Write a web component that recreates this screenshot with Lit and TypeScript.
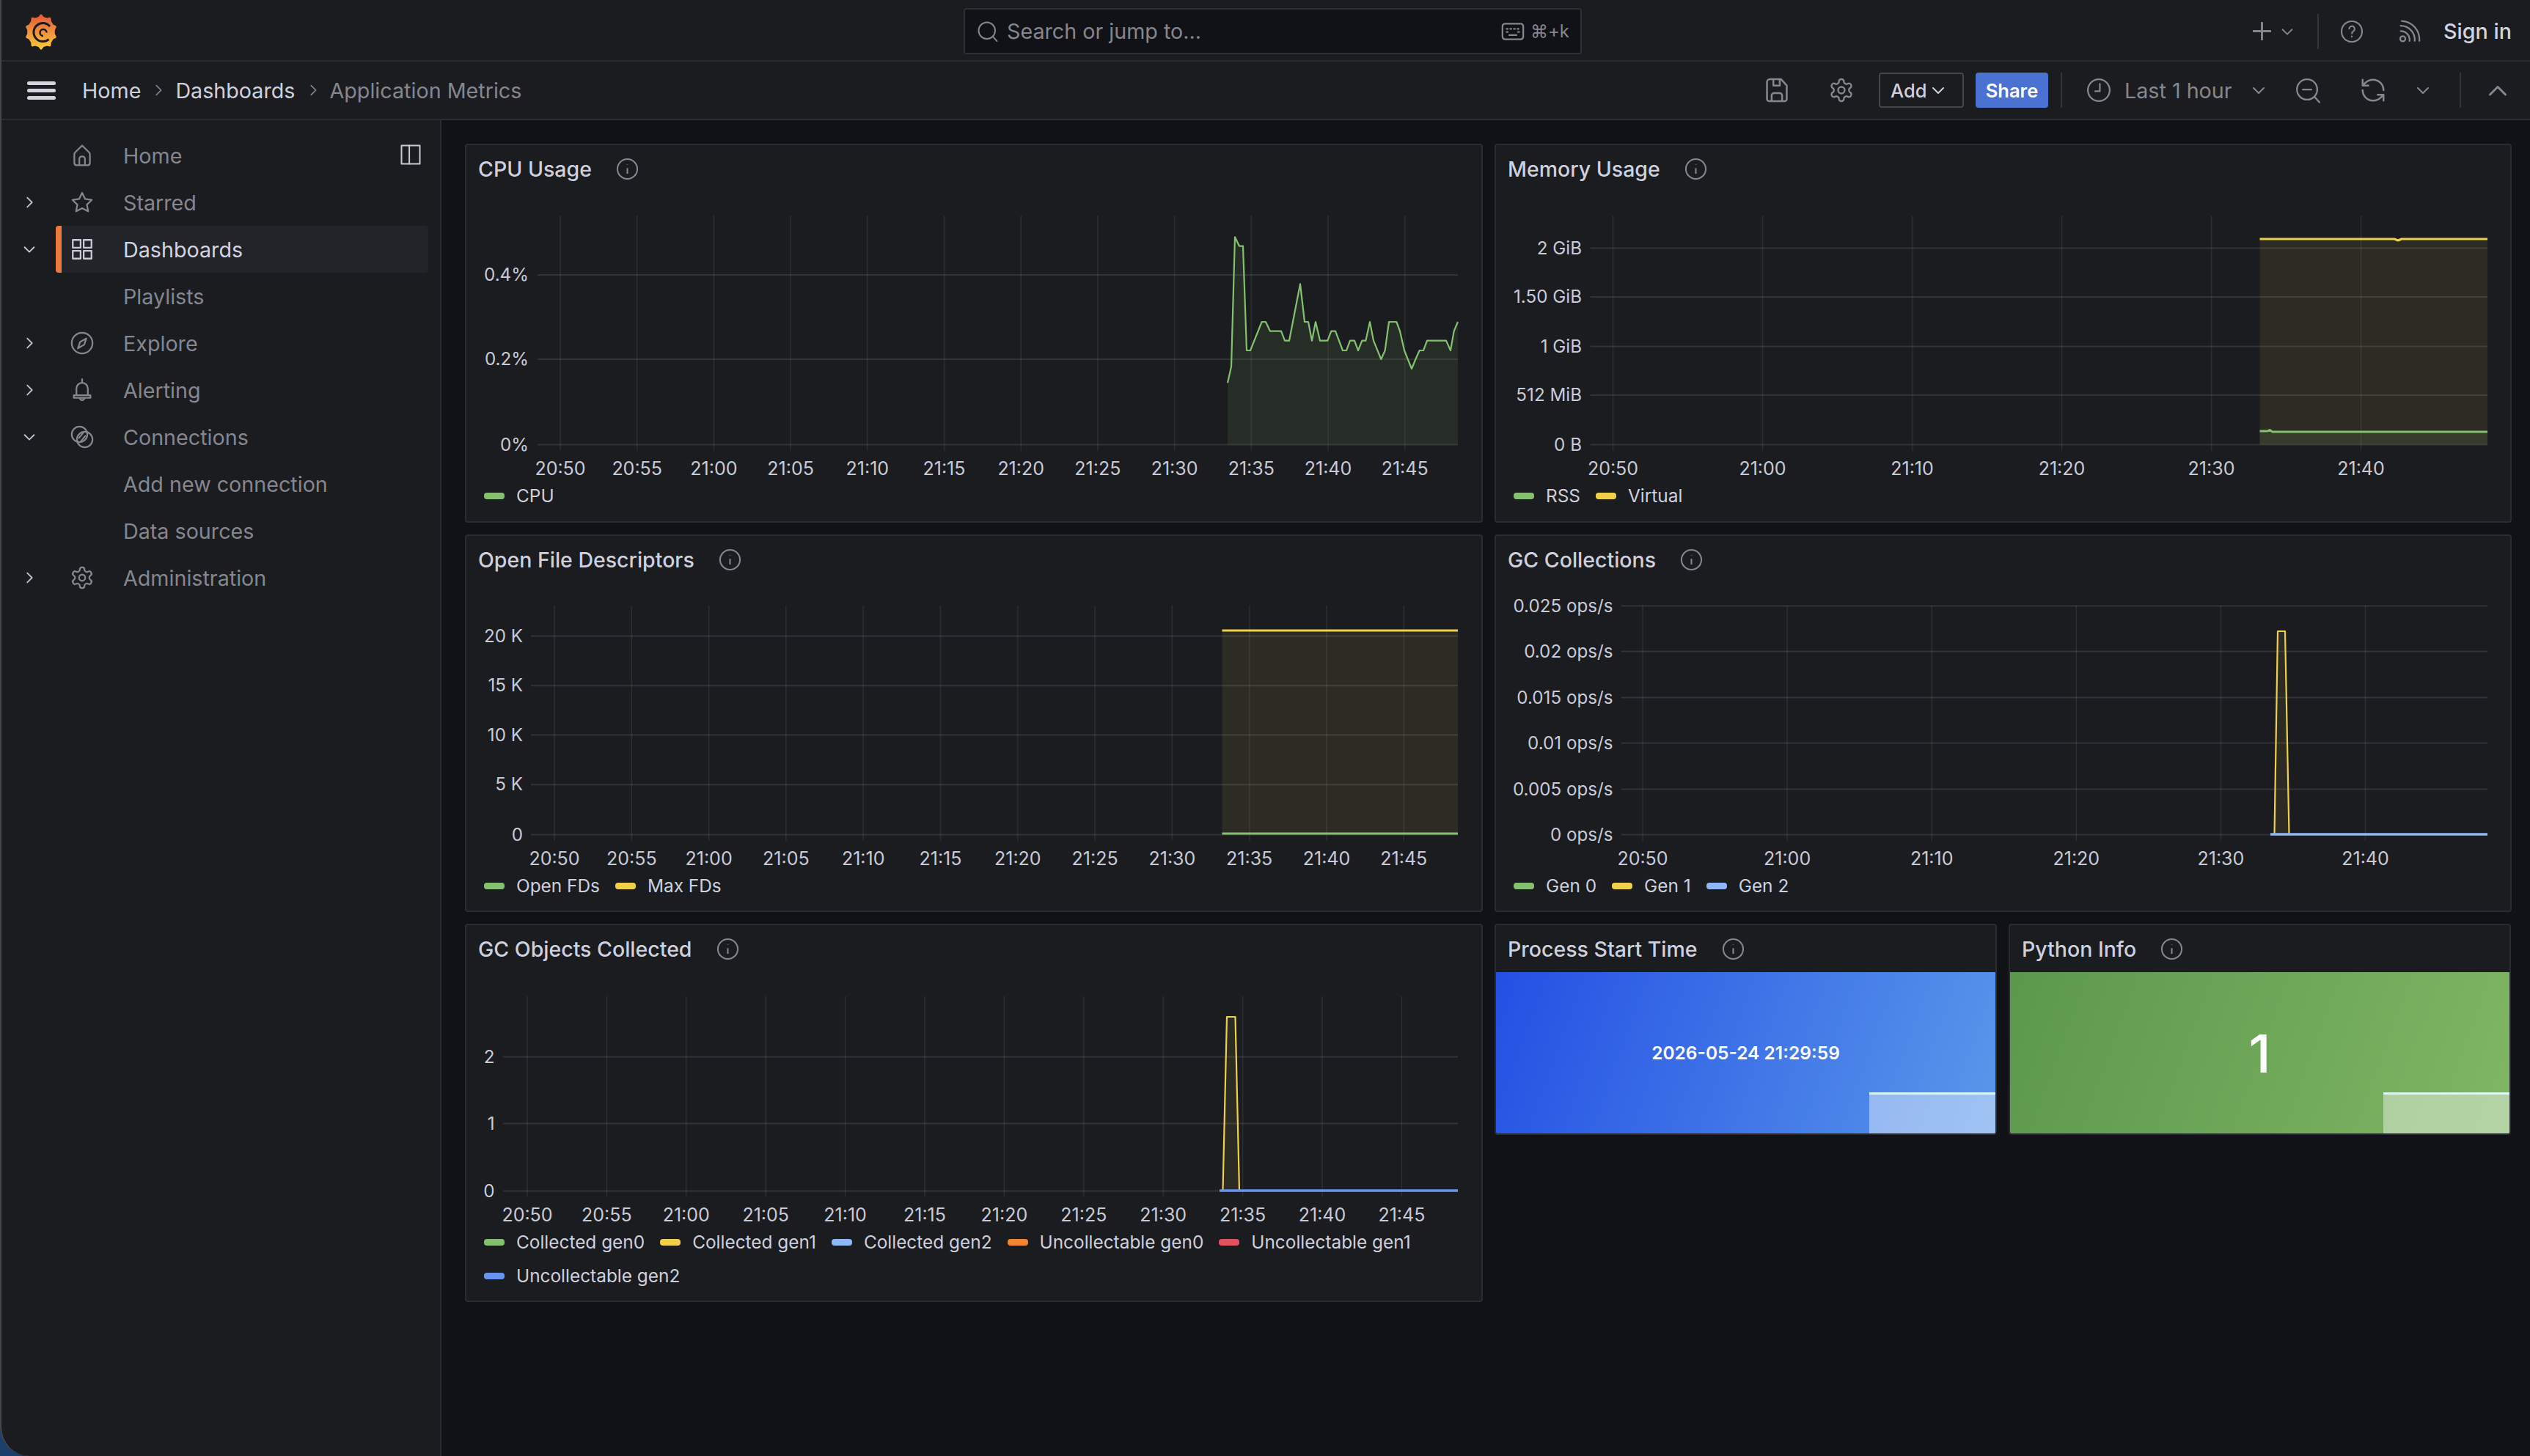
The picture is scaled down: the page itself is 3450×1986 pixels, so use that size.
import { LitElement, html, svg, css } from "lit";
import { customElement, property } from "lit/decorators.js";
import { classMap } from "lit/directives/class-map.js";

const GREEN = "#85c070";
const YELLOW = "#eed04a";
const SKY = "#8fb7f8";
const ORANGE = "#f2852f";
const RED = "#e0525f";
const BLUE = "#6795ee";

// outline icons, all on a 24 unit box
const ICONS: Record<string, any> = {
  home: svg`<path d="M12 2.500 5.200 9.200Q4.500 10 4.500 11v8q0 2.500 2.500 2.500h10q2.500 0 2.500-2.500v-8q0-1-.7-1.800zM9.300 21.500V15.500q0-2.500 2.700-2.500t2.700 2.500v6"/>`,
  star: svg`<path d="m12 2.800 2.900 6 6.400.9-4.700 4.500 1.200 6.500L12 17.600l-5.800 3.100 1.200-6.500-4.700-4.500 6.400-.9z"/>`,
  apps: svg`<rect x="3" y="3" width="7.500" height="7.500"/><rect x="13.500" y="3" width="7.500" height="7.500"/><rect x="3" y="13.500" width="7.500" height="7.500"/><rect x="13.500" y="13.500" width="7.500" height="7.500"/>`,
  compass: svg`<circle cx="12" cy="12" r="10"/><path d="M16 7.500 14 13.500 8 17l2-6z"/>`,
  bell: svg`<path d="M12 1.500V4M6.500 17v-6.500a5.500 5.500 0 0 1 11 0V17M4 17h16v2.500H4zM9.800 19.500a2.200 2.200 0 0 0 4.400 0"/>`,
  link: svg`<circle cx="9.500" cy="9.500" r="7.500"/><circle cx="14.500" cy="14.500" r="7.500"/><path d="m9 13 4-5M11 16l4-5"/>`,
  gear: svg`<path d="M12.220 2h-.44a2 2 0 0 0-2 2v.18a2 2 0 0 1-1 1.730l-.43.25a2 2 0 0 1-2 0l-.15-.08a2 2 0 0 0-2.730.73l-.22.38a2 2 0 0 0 .73 2.730l.15.1a2 2 0 0 1 1 1.720v.51a2 2 0 0 1-1 1.740l-.15.09a2 2 0 0 0-.73 2.730l.22.38a2 2 0 0 0 2.730.73l.15-.08a2 2 0 0 1 2 0l.43.25a2 2 0 0 1 1 1.730V20a2 2 0 0 0 2 2h.44a2 2 0 0 0 2-2v-.18a2 2 0 0 1 1-1.730l.43-.25a2 2 0 0 1 2 0l.15.08a2 2 0 0 0 2.730-.73l.22-.39a2 2 0 0 0-.73-2.730l-.15-.08a2 2 0 0 1-1-1.740v-.5a2 2 0 0 1 1-1.740l.15-.09a2 2 0 0 0 .73-2.730l-.22-.38a2 2 0 0 0-2.730-.73l-.15.08a2 2 0 0 1-2 0l-.43-.25a2 2 0 0 1-1-1.730V4a2 2 0 0 0-2-2z"/><circle cx="12" cy="12" r="3"/>`,
  right: svg`<path d="m9 5 7 7-7 7"/>`,
  down: svg`<path d="m5 9 7 7 7-7"/>`,
  up: svg`<path d="m5 16 7-7 7 7"/>`,
  dock: svg`<rect x="2" y="2" width="20" height="20"/><path d="M10.500 2v20"/>`,
  search: svg`<circle cx="11" cy="11" r="9"/><path d="m17.500 17.500 4.500 5"/>`,
  keyboard: svg`<rect x="2" y="4.500" width="20" height="15" rx="2.500"/><path d="M6 9.500h1M9.500 9.500h1M13 9.500h1M16.500 9.500h1M6 12.500h1M17 12.500h1M8.500 15.500h7"/>`,
  plus: svg`<path d="M12 1v22M1 12h22"/>`,
  help: svg`<circle cx="12" cy="12" r="10.500"/><path d="M9.300 9.200a2.800 2.800 0 1 1 4.200 2.500c-1 .6-1.500 1.100-1.500 2.300M12 17v.4"/>`,
  rss: svg`<circle cx="6" cy="19" r="2.500"/><path d="M4 11.500a8.500 8.500 0 0 1 8.500 9.500M4 6.500A13.500 13.500 0 0 1 17.500 21M5 1.800A18 18 0 0 1 22 21"/>`,
  save: svg`<path d="M6 2.500h9.500l5 5.500v11.500a2 2 0 0 1-2 2H5.500a2 2 0 0 1-2-2V5A2.500 2.500 0 0 1 6 2.500zM9 2.500V8h5.500V2.500M7.500 21.500v-5a2 2 0 0 1 2-2h5a2 2 0 0 1 2 2v5"/>`,
  clock: svg`<circle cx="12" cy="12" r="10.500"/><path d="M13 6v7H8.500"/>`,
  zoomOut: svg`<circle cx="11" cy="11" r="9.500"/><path d="M7 11h8M18 18l4.500 5"/>`,
  sync: svg`<path d="M21 12a9 9 0 0 0-9-9 9.750 9.750 0 0 0-6.740 2.740L3 8M3 3v5h5M3 12a9 9 0 0 0 9 9 9.750 9.750 0 0 0 6.740-2.740L21 16M16 16h5v5"/>`,
  info: svg`<circle cx="12" cy="12" r="10.500"/><path d="M12 11v6M12 7v.4"/>`,
};

function icon(name: string, size: number, cls = "") {
  return html`<svg class="ic ${cls}" width=${size} height=${size} viewBox="0 0 24 24">${ICONS[name]}</svg>`;
}

function gearPath() {
  const pts: string[] = [];
  const teeth = 10;
  for (let i = 0; i < teeth; i++) {
    const a = (i / teeth) * Math.PI * 2 - Math.PI / 2;
    const w = Math.PI / teeth;
    [[21, -w * 0.6], [24, -w * 0.12], [24, w * 0.12], [21, w * 0.6]].forEach(([r, d]) => {
      pts.push(`${(24 + r * 0.9 * Math.cos(a + d)).toFixed(1)},${(24.500 + r * Math.sin(a + d)).toFixed(1)}`);
    });
  }
  return pts.join(" ");
}

interface Series {
  color: string;
  pts: number[][];
  width?: number;
  fill?: string;
  base?: number;
}

interface ChartCfg {
  title: string;
  left: number;
  top: number;
  width: number;
  chartH: number;
  plot: number[];
  labelX: number;
  gridTop: number;
  tickBottom: number;
  x0: number;
  xStep: number;
  xLabels: string[];
  xLabelY: number;
  yTicks: [string, number][];
  series: Series[];
  legend: [string, string][];
}

const times = (step: number, n: number) =>
  Array.from({ length: n }, (_, i) => {
    const m = 20 * 60 + 50 + i * step;
    return `${Math.floor(m / 60)}:${String(m % 60).padStart(2, "0")}`;
  });

// traced from the screenshot at 3x, offset 1650,270
const cpuTrace = [
  [72, 757], [87, 690], [102, 160], [120, 197], [135, 197], [150, 624], [165, 624], [212, 507], [228, 507], [246, 545],
  [291, 545], [306, 584], [324, 584], [369, 352], [387, 507], [402, 507], [417, 584], [432, 507], [450, 584], [481, 584],
  [496, 545], [513, 545], [543, 624], [558, 624], [573, 584], [591, 584], [606, 624], [622, 584], [637, 584], [654, 507],
  [669, 584], [700, 660], [716, 624], [732, 507], [763, 507], [777, 545], [795, 624], [825, 699], [841, 660], [857, 624],
  [873, 624], [888, 584], [966, 584], [984, 624], [998, 545], [1014, 507],
].map(([x, y]) => [1650 + x / 3, 270 + y / 3]);

const CHARTS: Record<string, ChartCfg> = {
  cpu: {
    title: "CPU Usage", left: 634, top: 196, width: 1388, chartH: 391,
    plot: [733, 1988], labelX: 721, gridTop: 294, tickBottom: 615,
    x0: 764, xStep: 104.700, xLabels: times(5, 12), xLabelY: 648,
    yTicks: [["0.4%", 375], ["0.2%", 490], ["0%", 606.500]],
    series: [{ color: GREEN, pts: cpuTrace, fill: "rgba(133,192,112,.1)", base: 606.500, width: 2.200 }],
    legend: [["CPU", GREEN]],
  },
  mem: {
    title: "Memory Usage", left: 2038, top: 196, width: 1387, chartH: 391,
    plot: [2168.500, 3392], labelX: 2157, gridTop: 294, tickBottom: 615,
    x0: 2199.500, xStep: 204, xLabels: times(10, 6), xLabelY: 648,
    yTicks: [["2 GiB", 338.500], ["1.50 GiB", 405], ["1 GiB", 472.500], ["512 MiB", 539], ["0 B", 606.500]],
    series: [
      { color: YELLOW, pts: [[3081.500, 326], [3265, 326], [3270, 328], [3275, 326], [3392, 326]], fill: "rgba(238,208,74,.09)", base: 606.500, width: 3 },
      { color: GREEN, pts: [[3081.500, 588], [3092, 588], [3095, 586.500], [3099, 589], [3392, 589]], fill: "rgba(133,192,112,.1)", base: 606.500, width: 3 },
    ],
    legend: [["RSS", GREEN], ["Virtual", YELLOW]],
  },
  fds: {
    title: "Open File Descriptors", left: 634, top: 729, width: 1388, chartH: 390,
    plot: [724, 1988], labelX: 713, gridTop: 826, tickBottom: 1147,
    x0: 756, xStep: 105.300, xLabels: times(5, 12), xLabelY: 1180,
    yTicks: [["20 K", 867.500], ["15 K", 935.300], ["10 K", 1002.500], ["5 K", 1070.300], ["0", 1138.500]],
    series: [
      { color: YELLOW, pts: [[1666.500, 860], [1988, 860]], fill: "rgba(238,208,74,.09)", base: 1138.500, width: 3 },
      { color: GREEN, pts: [[1666.500, 1137], [1988, 1137]], width: 3 },
    ],
    legend: [["Open FDs", GREEN], ["Max FDs", YELLOW]],
  },
  gc: {
    title: "GC Collections", left: 2038, top: 729, width: 1387, chartH: 390,
    plot: [2211, 3392], labelX: 2199.500, gridTop: 826, tickBottom: 1147,
    x0: 2240, xStep: 197.100, xLabels: times(10, 6), xLabelY: 1180,
    yTicks: [["0.025 ops/s", 826.500], ["0.02 ops/s", 888.500], ["0.015 ops/s", 951.500], ["0.01 ops/s", 1013.500], ["0.005 ops/s", 1076.500], ["0 ops/s", 1138.500]],
    series: [
      { color: YELLOW, pts: [[3101.500, 1138], [3106, 861], [3116, 861], [3121.500, 1138]], fill: "rgba(238,208,74,.09)", base: 1138, width: 2.200 },
      { color: SKY, pts: [[3096, 1138], [3392, 1138]], width: 3.500 },
    ],
    legend: [["Gen 0", GREEN], ["Gen 1", YELLOW], ["Gen 2", SKY]],
  },
  objs: {
    title: "GC Objects Collected", left: 634, top: 1260, width: 1388, chartH: 345,
    plot: [686, 1988], labelX: 674.500, gridTop: 1359, tickBottom: 1632,
    x0: 719, xStep: 108.400, xLabels: times(5, 12), xLabelY: 1666,
    yTicks: [["2", 1441.500], ["1", 1532.500], ["0", 1624.500]],
    series: [
      { color: YELLOW, pts: [[1667.500, 1624], [1673, 1387], [1684.500, 1387], [1690, 1624]], fill: "rgba(238,208,74,.09)", base: 1624, width: 2.200 },
      { color: BLUE, pts: [[1663, 1624], [1988, 1624]], width: 3.500 },
    ],
    legend: [["Collected gen0", GREEN], ["Collected gen1", YELLOW], ["Collected gen2", SKY], ["Uncollectable gen0", ORANGE], ["Uncollectable gen1", RED], ["Uncollectable gen2", BLUE]],
  },
};

const panelStyles = css`
  :host {
    display: block;
    box-sizing: border-box;
    background: #1b1c20;
    border: 2px solid #2a2b30;
    border-radius: 4px;
    overflow: hidden;
    font-family: Inter, "Liberation Sans", sans-serif;
    color: #cfd0de;
  }
  .head {
    height: 63px;
    padding: 1px 0 0 16px;
    display: flex;
    align-items: center;
    gap: 33px;
    font-size: 28.500px;
    font-weight: 500;
  }
  .ic {
    fill: none;
    stroke: #85868f;
    stroke-width: 1.600;
  }
`;

@customElement("time-panel")
export class TimePanel extends LitElement {
  @property({ attribute: false }) cfg!: ChartCfg;

  static styles = [
    panelStyles,
    css`
      svg.chart {
        display: block;
      }
      .gx {
        stroke: rgba(240, 250, 255, 0.08);
        stroke-width: 1.500;
      }
      .gy {
        stroke: rgba(240, 250, 255, 0.11);
        stroke-width: 2;
      }
      text {
        fill: #c9cad8;
      }
      .ty {
        font-size: 24.200px;
      }
      .tx {
        font-size: 25px;
      }
      .legend {
        display: flex;
        flex-wrap: wrap;
        column-gap: 21px;
        margin-top: -4px;
        padding-left: 24px;
        font-size: 24.400px;
      }
      .item {
        height: 46px;
        display: flex;
        align-items: center;
        gap: 16px;
      }
      .swatch {
        width: 28px;
        height: 9px;
        border-radius: 4px;
      }
    `,
  ];

  render() {
    const c = this.cfg;
    const vx = c.left + 2;
    const vy = c.top + 66;
    const w = c.width - 4;
    const h = c.chartH + 4;
    return html`
      <div class="head"><span>${c.title}</span>${icon("info", 31)}</div>
      <svg class="chart" width=${w} height=${h} viewBox="${vx} ${vy} ${w} ${h}">
        ${c.xLabels.map((_, i) => {
          const x = c.x0 + i * c.xStep;
          return svg`<line class="gx" x1=${x} x2=${x} y1=${c.gridTop} y2=${c.tickBottom}></line>`;
        })}
        ${c.yTicks.map(([, y]) => svg`<line class="gy" x1=${c.plot[0]} x2=${c.plot[1]} y1=${y} y2=${y}></line>`)}
        ${c.series.map((s) => {
          const line = s.pts.map((p) => p.join(",")).join(" ");
          const first = s.pts[0][0];
          const last = s.pts[s.pts.length - 1][0];
          return svg`
            ${s.fill ? svg`<polygon fill=${s.fill} points="${first},${s.base} ${line} ${last},${s.base}"></polygon>` : ""}
            <polyline fill="none" stroke=${s.color} stroke-width=${s.width ?? 2.200} stroke-linejoin="round" points=${line}></polyline>`;
        })}
        ${c.yTicks.map(([t, y]) => svg`<text class="ty" x=${c.labelX} y=${y + 8} text-anchor="end">${t}</text>`)}
        ${c.xLabels.map((t, i) => svg`<text class="tx" x=${c.x0 + i * c.xStep} y=${c.xLabelY} text-anchor="middle">${t}</text>`)}
      </svg>
      <div class="legend">
        ${c.legend.map(
          ([name, color]) => html`<div class="item"><span class="swatch" style="background:${color}"></span>${name}</div>`
        )}
      </div>
    `;
  }
}

@customElement("stat-panel")
export class StatPanel extends LitElement {
  @property() title = "";
  @property() value = "";
  @property() kind = "blue";

  static styles = [
    panelStyles,
    css`
      .body {
        position: relative;
        height: 220px;
        display: flex;
        align-items: center;
        justify-content: center;
        color: #fff;
      }
      .blue {
        background: linear-gradient(110deg, #2350e4, #5a98ea);
        font-size: 24.500px;
        font-weight: 600;
      }
      .green {
        background: linear-gradient(110deg, #5c984c, #80b665);
        font-size: 72px;
        font-weight: 500;
      }
      .spark {
        position: absolute;
        right: 0;
        bottom: 0;
        width: 172px;
        height: 56px;
        box-sizing: border-box;
        border-top: 3px solid rgba(225, 255, 255, 0.85);
        background: rgba(255, 255, 255, 0.42);
      }
    `,
  ];

  render() {
    return html`
      <div class="head"><span>${this.title}</span>${icon("info", 31)}</div>
      <div class="body ${this.kind}">${this.value}<div class="spark"></div></div>
    `;
  }
}

const NAV = [
  { label: "Home", icon: "home" },
  { label: "Starred", icon: "star", chevron: "right" },
  { label: "Dashboards", icon: "apps", chevron: "down", active: true },
  { label: "Playlists" },
  { label: "Explore", icon: "compass", chevron: "right" },
  { label: "Alerting", icon: "bell", chevron: "right" },
  { label: "Connections", icon: "link", chevron: "down" },
  { label: "Add new connection" },
  { label: "Data sources" },
  { label: "Administration", icon: "gear", chevron: "right" },
];

@customElement("app-root")
export class AppRoot extends LitElement {
  static styles = css`
    :host {
      display: block;
      width: 3450px;
      height: 1986px;
      background: linear-gradient(90deg, #1d3f6c 0, #1d3f6c 24px, #3b2a22 40px);
      font-family: Inter, "Liberation Sans", sans-serif;
      font-size: 28.700px;
      color: #cfd0de;
    }
    .window {
      box-sizing: border-box;
      height: 100%;
      display: flex;
      flex-direction: column;
      background: #1b1c20;
      border-left: 2px solid #46474c;
      border-bottom-left-radius: 40px;
      overflow: hidden;
    }
    .ic {
      fill: none;
      stroke: #85868f;
      stroke-width: 1.600;
      stroke-linecap: round;
      stroke-linejoin: round;
      flex: none;
    }
    .ic.thin {
      stroke-width: 2;
    }
    .ic.thick {
      stroke-width: 2.800;
    }
    .topbar {
      box-sizing: border-box;
      height: 84px;
      padding-top: 3px;
      border-bottom: 2px solid #2b2c31;
      display: grid;
      grid-template-columns: 1312px 843px 1fr;
      align-items: center;
    }
    .logo {
      margin: 2px 0 0 30px;
      display: block;
    }
    .search {
      box-sizing: border-box;
      height: 63px;
      display: flex;
      align-items: center;
      padding: 0 15px 0 16px;
      background: #111217;
      border: 2px solid #2e2f35;
      border-radius: 4px;
      color: #85868f;
    }
    .search span {
      margin-left: 11px;
    }
    .search .kbd {
      margin-left: auto;
      display: flex;
    }
    .search .keys {
      margin-left: 7px;
      font-size: 24px;
    }
    .top-right {
      display: flex;
      align-items: center;
      justify-content: flex-end;
      padding-right: 25px;
    }
    .top-right .chev {
      margin-left: 11px;
    }
    .vsep {
      width: 2px;
      background: #34353a;
      flex: none;
    }
    .top-right .vsep {
      height: 48px;
      margin: 0 29px 0 30px;
    }
    .rss {
      margin-left: 45px;
    }
    .signin {
      margin-left: 30px;
      font-weight: 500;
      color: #d3d4e0;
    }
    .toolbar {
      box-sizing: border-box;
      height: 80px;
      border-bottom: 2px solid #2b2c31;
      display: flex;
      align-items: center;
      padding: 0 26px 0 35px;
    }
    .burger {
      width: 39px;
      display: flex;
      flex-direction: column;
      gap: 5px;
    }
    .burger i {
      height: 5px;
      border-radius: 3px;
      background: #d3d4e0;
    }
    .crumbs {
      display: flex;
      align-items: center;
      margin-left: 36px;
      flex: 1;
    }
    .crumbs .ic {
      margin: 0 12px 0 13px;
      stroke-width: 1.800;
    }
    .crumbs .last {
      color: #85868f;
    }
    .act {
      display: flex;
      align-items: center;
    }
    .save {
      margin-right: 51px;
    }
    .gearbtn {
      margin-right: 33px;
    }
    .add {
      box-sizing: border-box;
      width: 116px;
      height: 48px;
      display: flex;
      align-items: center;
      gap: 4px;
      padding-left: 14px;
      border: 2px solid #45464c;
      border-radius: 4px;
      font-size: 25.500px;
      font-weight: 500;
    }
    .add .ic {
      stroke: #cfd0de;
    }
    .share {
      width: 99px;
      height: 48px;
      margin-left: 16px;
      display: flex;
      align-items: center;
      justify-content: center;
      background: #4b72d3;
      border-radius: 4px;
      color: #fff;
      font-size: 25.500px;
      font-weight: 600;
    }
    .act .vsep {
      height: 48px;
    }
    .sep-a {
      margin-left: 17px;
    }
    .clock {
      margin-left: 33px;
    }
    .range {
      width: 147px;
      margin-left: 18px;
      color: #85868f;
      white-space: nowrap;
    }
    .chev-a {
      margin-left: 24px;
    }
    .zoomout {
      margin-left: 38px;
    }
    .sync {
      margin-left: 52px;
    }
    .chev-b {
      margin-left: 37px;
    }
    .sep-b {
      margin: 0 32px 0 38px;
    }
    .body {
      flex: 1;
      display: flex;
      min-height: 0;
    }
    .side {
      box-sizing: border-box;
      width: 600px;
      flex: none;
      padding-top: 16px;
      border-right: 2px solid #2b2c31;
    }
    .row {
      position: relative;
      height: 64px;
      display: flex;
      align-items: center;
      color: #85868f;
    }
    .row .slot-chev {
      width: 74px;
      padding-left: 27px;
      box-sizing: border-box;
      display: flex;
    }
    .row .slot-chev .ic {
      stroke: #c0c1ce;
    }
    .row .box {
      align-self: stretch;
      width: 508px;
      display: flex;
      align-items: center;
      padding-left: 19px;
      gap: 39px;
      box-sizing: border-box;
      border-radius: 4px;
    }
    .row .box.plain {
      padding-left: 92px;
    }
    .row.active .box {
      background: #22242a;
      border-left: 8px solid #ea7b40;
      padding-left: 11px;
      color: #d3d4e0;
    }
    .row.active .ic {
      stroke: #c9cad8;
    }
    .row .dock {
      position: absolute;
      left: 543px;
      top: 16px;
    }
    .row .dock .ic {
      stroke: #c9cad8;
    }
    .main {
      flex: 1;
      background: #111217;
      padding: 32px 0 0 32px;
      display: grid;
      grid-template-columns: 1388px 1387px;
      grid-template-rows: 517px 515px 516px;
      gap: 16px;
      align-content: start;
    }
    .stats {
      display: flex;
      gap: 16px;
      align-items: flex-start;
    }
    .stats stat-panel {
      width: 685px;
      height: 288px;
    }
  `;

  private renderLogo() {
    return html`<svg class="logo" width="48" height="50" viewBox="0 0 48 50">
      <defs>
        <linearGradient id="lg" x1="0" y1="0" x2="0" y2="1">
          <stop offset="0" stop-color="#e5583a"></stop>
          <stop offset="1" stop-color="#f9cc3d"></stop>
        </linearGradient>
      </defs>
      <polygon fill="url(#lg)" points=${gearPath()}></polygon>
      <path d="M36 17A12.500 12.500 0 1 0 34.500 34.600" fill="none" stroke="#1b1c20" stroke-width="3"></path>
      <path d="M31.500 25.500A4.500 4.500 0 1 0 27 30" fill="none" stroke="#1b1c20" stroke-width="2.500"></path>
    </svg>`;
  }

  render() {
    return html`
      <div class="window">
        <div class="topbar">
          ${this.renderLogo()}
          <div class="search">
            ${icon("search", 30)}<span>Search or jump to...</span>
            <div class="kbd">${icon("keyboard", 34)}</div>
            <div class="keys">⌘+k</div>
          </div>
          <div class="top-right">
            ${icon("plus", 25, "thick")}${icon("down", 22, "chev thin")}
            <div class="vsep"></div>
            ${icon("help", 32)}${icon("rss", 34, "rss")}
            <div class="signin">Sign in</div>
          </div>
        </div>
        <div class="toolbar">
          <div class="burger"><i></i><i></i><i></i></div>
          <div class="crumbs">
            <span>Home</span>${icon("right", 22)}<span>Dashboards</span>${icon("right", 22)}<span class="last">Application Metrics</span>
          </div>
          <div class="act">
            ${icon("save", 38, "save")}${icon("gear", 36, "gearbtn")}
            <div class="add">Add${icon("down", 24, "thin")}</div>
            <div class="share">Share</div>
            <div class="vsep sep-a"></div>
            ${icon("clock", 34, "clock")}
            <div class="range">Last 1 hour</div>
            ${icon("down", 24, "chev-a thin")}${icon("zoomOut", 35, "zoomout")}${icon("sync", 38, "sync")}${icon("down", 24, "chev-b thin")}
            <div class="vsep sep-b"></div>
            ${icon("up", 36, "thin")}
          </div>
        </div>
        <div class="body">
          <nav class="side">
            ${NAV.map(
              (n, i) => html`<div class=${classMap({ row: true, active: !!n.active })}>
                <div class="slot-chev">${n.chevron ? icon(n.chevron, 22, "thin") : ""}</div>
                <div class=${classMap({ box: true, plain: !n.icon })}>${n.icon ? icon(n.icon, 34) : ""}<span>${n.label}</span></div>
                ${i === 0 ? html`<div class="dock">${icon("dock", 30)}</div>` : ""}
              </div>`
            )}
          </nav>
          <main class="main">
            <time-panel .cfg=${CHARTS.cpu}></time-panel>
            <time-panel .cfg=${CHARTS.mem}></time-panel>
            <time-panel .cfg=${CHARTS.fds}></time-panel>
            <time-panel .cfg=${CHARTS.gc}></time-panel>
            <time-panel .cfg=${CHARTS.objs}></time-panel>
            <div class="stats">
              <stat-panel title="Process Start Time" value="2026-05-24 21:29:59" kind="blue"></stat-panel>
              <stat-panel title="Python Info" value="1" kind="green"></stat-panel>
            </div>
          </main>
        </div>
      </div>
    `;
  }
}
